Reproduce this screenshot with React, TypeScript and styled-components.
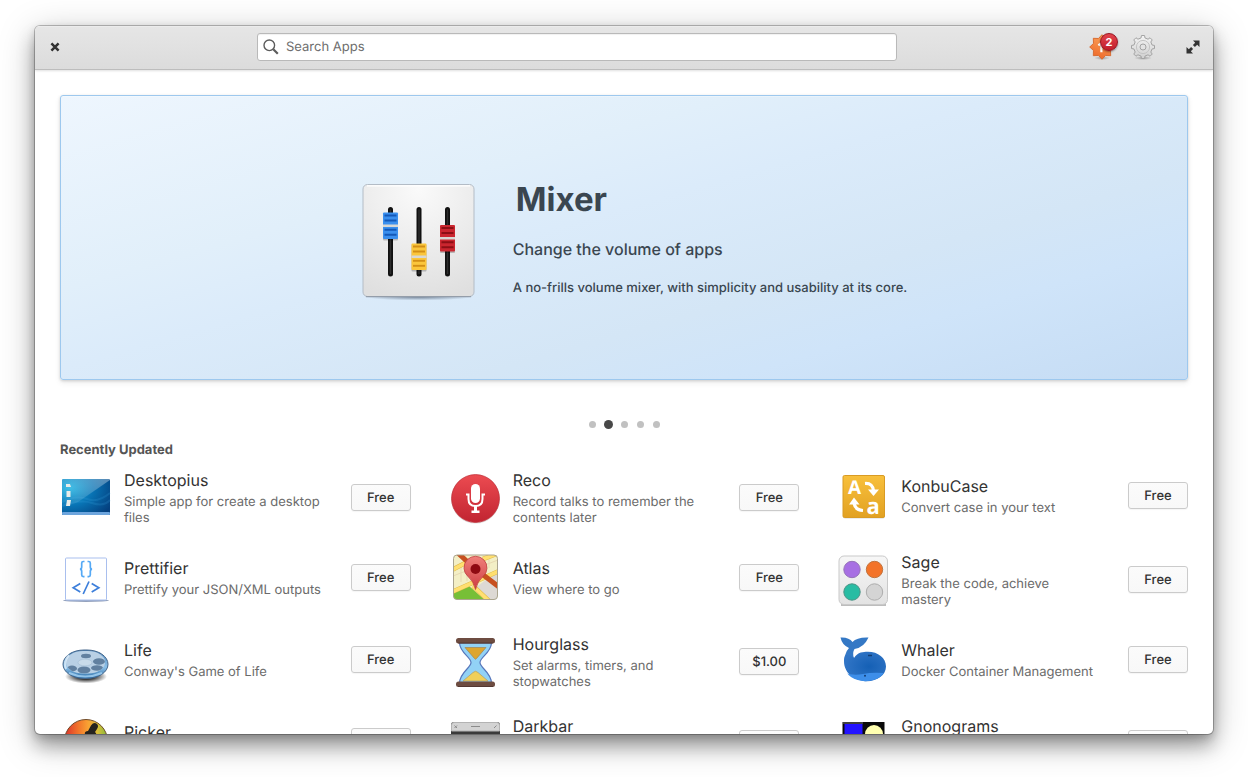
import React from "react";
import styled, { createGlobalStyle } from "styled-components";

const GlobalStyle = createGlobalStyle`
  *, *::before, *::after { box-sizing: border-box; }
  body {
    margin: 0;
    background: #fff;
    color: #333;
    font-family: Inter, "Open Sans", sans-serif;
    font-size: 13px;
    text-rendering: geometricPrecision;
  }
  h1, h2, h3, p { margin: 0; }
  button, input { font: inherit; color: inherit; text-rendering: inherit; }
`;

const Desktop = styled.div`
  display: flex;
  height: 100vh;
  min-height: 400px;
  padding: 26px 35px 43px;
  overflow: hidden;
`;

const Window = styled.div`
  flex: 1;
  min-width: 0;
  display: flex;
  flex-direction: column;
  overflow: hidden;
  border-radius: 5px;
  background: #fff;
  box-shadow:
    0 0 0 1px rgba(0, 0, 0, 0.24),
    0 3px 8px rgba(0, 0, 0, 0.16),
    0 12px 18px rgba(0, 0, 0, 0.28),
    0 8px 36px rgba(0, 0, 0, 0.26);
`;

const HeaderBar = styled.header`
  flex: none;
  display: flex;
  align-items: center;
  height: 44px;
  padding: 0 8px 2px;
  background: linear-gradient(#e6e6e6, #dcdcdc);
  border-bottom: 1px solid #bdbdbd;
  box-shadow: inset 0 1px #ececec, 0 1px 2px rgba(0, 0, 0, 0.12);
`;

const IconButton = styled.button<{ $size: number }>`
  position: relative;
  display: grid;
  place-items: center;
  width: ${(p) => p.$size}px;
  height: ${(p) => p.$size}px;
  padding: 0;
  border: 0;
  background: none;
`;

const SearchField = styled.label`
  display: flex;
  align-items: center;
  gap: 7px;
  flex: 0 1 640px;
  height: 28px;
  margin: 0 auto;
  padding: 0 5px;
  background: #fff;
  border: 1px solid #b9b9b9;
  border-radius: 3px;
  box-shadow: inset 0 1px 1px rgba(0, 0, 0, 0.06);
`;

const SearchInput = styled.input`
  flex: 1;
  min-width: 0;
  padding: 0;
  border: 0;
  outline: 0;
  background: none;
  line-height: 18px;
  &::placeholder { color: #6e6e6e; opacity: 1; }
`;

const HeaderActions = styled.div`
  display: flex;
  align-items: center;
  gap: 8px;
  margin-right: 22px;
`;

const Badge = styled.span`
  position: absolute;
  top: 2px;
  right: 1px;
  width: 18px;
  height: 18px;
  border: 1px solid #99131f;
  border-radius: 50%;
  background: linear-gradient(#e2434d, #c1202c);
  box-shadow: 0 1px 2px rgba(0, 0, 0, 0.4);
  color: #fff;
  font-size: 11px;
  font-weight: 700;
  line-height: 16px;
  text-align: center;
`;

const Content = styled.main`
  flex: 1;
  min-height: 0;
  overflow: hidden;
  padding: 25px 25px 0;
`;

const Hero = styled.section`
  display: flex;
  align-items: center;
  justify-content: center;
  gap: 36px;
  height: 285px;
  padding: 0 0 1px 8px;
  border: 1px solid #9dc8ee;
  border-radius: 3px;
  background: linear-gradient(164deg, #eef6fe 0%, #e1effa 32%, #dbebfa 45%, #d4e6f6 66%, #cfe4f9 78%, #c5dcf4 100%);
  box-shadow: inset 0 1px rgba(255, 255, 255, 0.3), 0 1px 3px rgba(0, 0, 0, 0.16), 0 3px 6px rgba(0, 0, 0, 0.07);
  color: #3a4650;
`;

const HeroTitle = styled.h1`
  padding-left: 3px;
  font-size: 33px;
  font-weight: 700;
  line-height: 42px;
`;

const HeroSummary = styled.p`
  margin-top: 17px;
  font-size: 16px;
  font-weight: 500;
  line-height: 24px;
`;

const HeroDetail = styled.p`
  margin-top: 18px;
  font-weight: 500;
  line-height: 18px;
`;

const Pager = styled.nav`
  display: flex;
  justify-content: center;
  margin-top: 36px;
`;

const PagerDot = styled.button<{ $active?: boolean }>`
  display: grid;
  place-items: center;
  width: 16px;
  height: 16px;
  padding: 0;
  border: 0;
  background: none;
  &::before {
    content: "";
    width: ${(p) => (p.$active ? 9 : 7)}px;
    height: ${(p) => (p.$active ? 9 : 7)}px;
    border-radius: 50%;
    background: ${(p) => (p.$active ? "#484848" : "#c1c1c1")};
  }
`;

const SectionTitle = styled.h2`
  margin: 9px 0 10px;
  color: #555;
  font-size: 13px;
  font-weight: 700;
  line-height: 18px;
`;

const AppGrid = styled.div`
  display: grid;
  grid-template-columns: repeat(3, minmax(0, 1fr));
  grid-auto-rows: minmax(57px, auto);
  gap: 25px 38px;
  align-items: start;
`;

const AppItem = styled.article`
  display: flex;
  align-items: center;
  gap: 12px;
`;

const AppText = styled.div`
  flex: 1;
  min-width: 0;
  padding-right: 16px;
`;

const AppName = styled.h3`
  margin-bottom: 3px;
  font-size: 16px;
  font-weight: 400;
  line-height: 22px;
`;

const AppSummary = styled.p`
  color: #6b6b6b;
  line-height: 16px;
`;

const PriceButton = styled.button`
  flex: none;
  width: 60px;
  height: 27px;
  padding: 1px 0 0;
  border: 1px solid #cbcbcb;
  border-radius: 3px;
  background: linear-gradient(#fbfbfb, #f8f8f8);
  box-shadow: 0 1px 1px rgba(0, 0, 0, 0.04);
  font-weight: 500;
  line-height: 18px;
`;

const GlyphText = styled.text`
  font-family: "Open Sans", sans-serif;
  font-weight: 700;
`;

const Icon = ({ children }: { children: React.ReactNode }) => (
  <svg width="52" height="52" viewBox="0 0 52 52" aria-hidden="true">
    {children}
  </svg>
);

const starPath = (cx: number, cy: number, outer: number, inner: number, points: number) =>
  Array.from({ length: points * 2 }, (_, i) => {
    const r = i % 2 ? inner : outer;
    const a = (Math.PI * (i + 1)) / points;
    return `${i ? "L" : "M"}${(cx + r * Math.sin(a)).toFixed(2)} ${(cy - r * Math.cos(a)).toFixed(2)}`;
  }).join("") + "Z";

const gearPath = (cx: number, cy: number, outer: number, inner: number, teeth: number) => {
  const step = (Math.PI * 2) / teeth;
  const pt = (r: number, a: number) => `${(cx + r * Math.sin(a)).toFixed(2)} ${(cy - r * Math.cos(a)).toFixed(2)}`;
  return Array.from({ length: teeth }, (_, i) => {
    const a = i * step;
    return `${i ? "L" : "M"}${pt(inner, a - step * 0.27)}L${pt(outer, a - step * 0.17)}L${pt(outer, a + step * 0.17)}L${pt(inner, a + step * 0.27)}`;
  }).join("") + "Z";
};

const SearchIcon = () => (
  <svg width="16" height="16" viewBox="0 0 16 16" fill="none" stroke="#5c5c5c" aria-hidden="true">
    <circle cx="6.3" cy="6.3" r="5.3" strokeWidth="1.4" />
    <path d="M10.3 10.3 14.8 14.8" strokeWidth="2.2" />
  </svg>
);

const CloseIcon = () => (
  <svg width="10" height="10" viewBox="0 0 10 10" aria-hidden="true">
    <path d="M1.4 1.4 8.6 8.6M8.6 1.4 1.4 8.6" stroke="#333" strokeWidth="2.5" />
  </svg>
);

const UpdatesIcon = () => (
  <svg width="32" height="32" viewBox="0 0 32 32" aria-hidden="true">
    <defs>
      <linearGradient id="burst" x2="0" y2="1"><stop stopColor="#fba25a" /><stop offset="1" stopColor="#ee6c2c" /></linearGradient>
      <radialGradient id="iconShade"><stop stopOpacity=".3" /><stop offset="1" stopOpacity="0" /></radialGradient>
    </defs>
    <ellipse cx="15" cy="27" rx="8" ry="2" fill="url(#iconShade)" />
    <path d={starPath(15, 16, 12.3, 9.2, 8)} transform="rotate(22.5 15 16)" fill="url(#burst)" stroke="#d5652b" strokeWidth=".8" strokeLinejoin="round" />
    <path d="M14.4 11.5v9.8M14.6 11.8l-3.2 2.6" stroke="#fff" strokeWidth="2.2" fill="none" />
  </svg>
);

const GearIcon = () => (
  <svg width="32" height="32" viewBox="0 0 32 32" aria-hidden="true">
    <defs>
      <linearGradient id="gear" x2="0" y2="1"><stop stopColor="#f4f4f4" /><stop offset="1" stopColor="#cfcfcf" /></linearGradient>
    </defs>
    <ellipse cx="16" cy="27" rx="9" ry="2" fill="url(#iconShade)" />
    <path d={gearPath(16, 16, 11.6, 9.3, 8)} fill="url(#gear)" stroke="#a3a3a3" strokeWidth="1" strokeLinejoin="round" />
    <circle cx="16" cy="16" r="6.6" fill="none" stroke="#c4c4c4" />
    <circle cx="16" cy="16" r="3" fill="#e3e3e3" stroke="#a3a3a3" />
  </svg>
);

const ExpandIcon = () => (
  <svg width="14" height="14" viewBox="0 0 14 14" aria-hidden="true">
    <path d="M7 .5H13.5V7L11.2 4.8 8.9 7.1 6.9 5.1 9.2 2.8ZM7 13.5H.5V7L2.8 9.2 5.1 6.9 7.1 8.9 4.8 11.2Z" fill="#333" />
  </svg>
);

const Fader = ({ x, y, body, line }: { x: number; y: number; body: string; line: string }) => (
  <g>
    <path d={`M${x} 36.5V101`} stroke="#111" strokeWidth="5" strokeLinecap="round" />
    <path d={`M${x} 36.5V101`} stroke="#2d2d2d" strokeWidth="1.5" />
    <rect x={x - 7.5} y={y + 1} width="15" height="27" rx="1" fill="#000" opacity=".22" />
    <rect x={x - 7.5} y={y} width="15" height="26.5" rx="1" fill={body} />
    <rect x={x - 7.5} y={y + 12} width="15" height="2.5" fill="#d8d8d4" />
    {[3, 8, 17.3, 22.3].map((d) => (
      <path key={d} d={`M${x - 6} ${y + d}h12`} stroke={line} strokeWidth="1.9" />
    ))}
  </g>
);

const MixerIcon = () => (
  <svg width="128" height="128" viewBox="0 0 128 128" aria-hidden="true">
    <defs>
      <radialGradient id="plate" cx=".5" cy=".05" r="1"><stop stopColor="#fafafa" /><stop offset="1" stopColor="#dfdfdf" /></radialGradient>
      <radialGradient id="plateShade"><stop stopColor="#1c2c44" stopOpacity=".5" /><stop offset="1" stopColor="#1c2c44" stopOpacity="0" /></radialGradient>
    </defs>
    <ellipse cx="69.5" cy="124" rx="54" ry="3.5" fill="url(#plateShade)" />
    <rect x="14" y="11.5" width="111" height="112" rx="4.5" fill="url(#plate)" stroke="#b3bcc6" />
    <path d="M18 12.8H121" stroke="#fff" strokeWidth="1.2" />
    <path d="M17 123.7H122" stroke="#8d97a3" strokeWidth="1" />
    <Fader x={41.5} y={39.5} body="#3a8fee" line="#1358b8" />
    <Fader x={70} y={70.5} body="#fbc63c" line="#d38f16" />
    <Fader x={98.5} y={52} body="#ca262f" line="#8c0f15" />
  </svg>
);

const DesktopiusIcon = () => (
  <Icon>
    <defs>
      <radialGradient id="sea" cx=".15" cy=".25" r="1"><stop stopColor="#1fb3e2" /><stop offset=".5" stopColor="#0873b4" /><stop offset="1" stopColor="#04407f" /></radialGradient>
      <linearGradient id="glare" x1="0" y1="1" x2="1" y2="0"><stop stopColor="#fff" stopOpacity="0" /><stop offset="1" stopColor="#fff" stopOpacity=".35" /></linearGradient>
    </defs>
    <rect x="2" y="7" width="48" height="36" rx="1" fill="url(#sea)" />
    <path d="M2 30Q16 23 27 27T50 21M2 34Q20 27 32 31T50 28" stroke="#3da4df" strokeOpacity=".2" strokeWidth="2" fill="none" />
    <path d="M18 30 50 8V7H2V36Z" fill="url(#glare)" />
    <rect x="2" y="40" width="48" height="3" rx="1" fill="#6da5dd" />
    <g fill="#e9ece9"><path d="M6 12h4l1 3H6z" /><rect x="6.5" y="19" width="4" height="6" /><path d="M7 28h4l-1 6H6z" /></g>
  </Icon>
);

const PrettifierIcon = () => (
  <Icon>
    <ellipse cx="26" cy="49.5" rx="23" ry="1.5" fill="#29457c" opacity=".5" />
    <rect x="5.5" y="7" width="41" height="42" rx="1" fill="#fff" stroke="#a9bfee" />
    <g fill="none" strokeWidth="1.7">
      <path d="M24.5 10.5h-1.2q-1.6 0-1.6 1.6v3.6q0 2.4-1.8 2.4 1.8 0 1.8 2.4v3.6q0 1.6 1.6 1.6h1.2M27.5 10.5h1.2q1.6 0 1.6 1.6v3.6q0 2.4 1.8 2.4-1.8 0-1.8 2.4v3.6q0 1.6-1.6 1.6h-1.2" stroke="#55a9f5" />
      <path d="M20.3 32.5 13.2 36.8 20.3 41M31.7 32.5 38.8 36.8 31.7 41M29 30.5 23.2 43" stroke="#3d7fdb" />
    </g>
  </Icon>
);

const LifeIcon = () => (
  <Icon>
    <defs>
      <linearGradient id="dish" x2="0" y2="1"><stop stopColor="#4e86b9" /><stop offset=".6" stopColor="#8cc0e8" /><stop offset="1" stopColor="#2a6ca6" /></linearGradient>
      <radialGradient id="dishShade"><stop offset=".4" stopOpacity=".8" /><stop offset="1" stopOpacity="0" /></radialGradient>
      <clipPath id="dishTop"><rect x="6" y="18" width="39" height="22.5" rx="17" ry="11" /></clipPath>
    </defs>
    <ellipse cx="26" cy="43.5" rx="21" ry="7" fill="url(#dishShade)" />
    <rect x="3" y="17" width="45" height="28.5" rx="21" ry="14.2" fill="url(#dish)" stroke="#44658a" />
    <path d="M9 40Q25 47 42 40" stroke="#a8d4f5" strokeWidth="2" fill="none" opacity=".8" />
    <g clipPath="url(#dishTop)">
      <rect x="6" y="18" width="39" height="23" fill="#b9d0e5" />
      <g fill="#6180a0">
        <ellipse cx="26" cy="23" rx="5" ry="2.2" /><ellipse cx="39" cy="28.5" rx="6" ry="3.3" />
        <ellipse cx="12" cy="35.5" rx="5" ry="3" /><ellipse cx="24" cy="37" rx="6.5" ry="3.5" /><ellipse cx="37" cy="35" rx="6" ry="2.8" />
      </g>
      <ellipse cx="25" cy="29.5" rx="7" ry="3.4" fill="#c9dbea" stroke="#a3bdd5" strokeWidth=".6" />
    </g>
    <path d="M6 36Q3 29 9 22" stroke="#e6f3fc" strokeWidth="2" fill="none" opacity=".75" />
  </Icon>
);

const PickerIcon = () => (
  <Icon>
    <defs>
      <linearGradient id="hue"><stop stopColor="#d9302c" /><stop offset=".3" stopColor="#f0702a" /><stop offset=".55" stopColor="#f9a233" /><stop offset=".78" stopColor="#d6bf3a" /><stop offset="1" stopColor="#7fb93a" /></linearGradient>
    </defs>
    <circle cx="26" cy="26" r="21.5" fill="url(#hue)" stroke="#6f4a28" />
    <path d="M31 10.500q3-4 6-1.500 2 2 0 5l-2 3q2 2 1 4l-11-1.500q-1-3 3-3.500z" fill="#26231f" />
  </Icon>
);

const RecoIcon = () => (
  <Icon>
    <defs><linearGradient id="rec" x2="0" y2="1"><stop stopColor="#ec4b51" /><stop offset="1" stopColor="#c12431" /></linearGradient></defs>
    <circle cx="26.5" cy="27.3" r="24.3" fill="#000" opacity=".12" />
    <circle cx="26.5" cy="26.5" r="23.9" fill="url(#rec)" stroke="#c13039" strokeWidth=".8" />
    <rect x="22" y="12" width="9" height="19" rx="4.5" fill="#fff" />
    <path d="M17 22.5H19.5V27Q19.5 34 26.5 34T33.5 27V22.5H36" stroke="#fff" strokeWidth="2" fill="none" />
    <path d="M25 34H28V38.5H30.5V41H22.5V38.5H25Z" fill="#fff" />
  </Icon>
);

const AtlasIcon = () => (
  <Icon>
    <defs>
      <clipPath id="map"><rect x="4.5" y="4" width="44" height="44.5" rx="3.5" /></clipPath>
      <linearGradient id="pin" x2="0" y2="1"><stop stopColor="#f0817b" /><stop offset="1" stopColor="#cd3c42" /></linearGradient>
    </defs>
    <g clipPath="url(#map)">
      <rect x="4" y="4" width="45" height="45" fill="#f3efc6" />
      <path d="M26 37 49 20V49H35Z" fill="#ddd9d4" />
      <path d="M4 41 20 35 36 49H4Z" fill="#77bf37" />
      <path d="M12 14V31M18 9V30M4 25 22 18M40 8V17M36 14 49 9" stroke="#e7d9b2" strokeWidth="1" />
      <path d="M3 19 22 9M34 8 50 2M3 41 50 20M24 35 40 50" stroke="#e0bb48" strokeWidth="4.6" fill="none" />
      <path d="M3 19 22 9M34 8 50 2M3 41 50 20M24 35 40 50" stroke="#ffdf70" strokeWidth="3.6" fill="none" />
      <path d="M9 2 24 16M33 23 50 36" stroke="#c7501f" strokeWidth="5" />
    </g>
    <rect x="4.5" y="4" width="44" height="44.5" rx="3.5" fill="none" stroke="#aba58f" />
    <path d="M26.5 38.5Q24.5 30 19 25.5A11.5 11.5 0 1 1 34 25.5Q28.5 30 26.5 38.5Z" fill="url(#pin)" stroke="#b73a3c" strokeWidth=".7" />
    <circle cx="26.5" cy="18" r="5" fill="#8e0a12" />
  </Icon>
);

const HourglassIcon = () => (
  <Icon>
    <path d="M10.5 7H42.5C42 17 31 21 31 26.5S42 36 42.5 47H10.5C11 36 22 32 22 26.5S11 17 10.5 7Z" fill="#92d2f6" stroke="#5676bb" strokeWidth="1.2" />
    <path d="M16 11.5H37L27.5 22.5Q26.5 24 25.5 22.5Z" fill="#dda52f" stroke="#a58a58" strokeWidth=".8" />
    <path d="M14 45Q21 39 24 36.5 26.5 34 29 36.5 32 39 39 45Z" fill="#f0cf59" stroke="#b4a36b" strokeWidth=".8" />
    <rect x="7" y="2" width="39" height="5.5" rx="2.5" fill="#6d4c41" />
    <rect x="7" y="45.5" width="39" height="5.5" rx="2.5" fill="#6d4c41" />
    <path d="M9 7H44M9 50.5H44" stroke="#4e342e" strokeWidth=".8" />
  </Icon>
);

const DarkbarIcon = () => (
  <Icon>
    <rect x="2" y="4" width="49" height="43" rx="3" fill="#3a3a3a" />
    <path d="M2.5 13V7Q2.5 4.500 5 4.500H48Q50.500 4.500 50.500 7V13Z" fill="#d3d3d3" stroke="#b3b3b3" />
    <path d="M5.500 7.500l2.500 2.500m0-2.500-2.500 2.500M22 8.500h9M45 10l2.500-2.500" stroke="#8b8b8b" />
  </Icon>
);

const KonbuIcon = () => (
  <Icon>
    <defs><linearGradient id="amber" x2="0" y2="1"><stop stopColor="#f8c03c" /><stop offset="1" stopColor="#e2a122" /></linearGradient></defs>
    <rect x="6" y="7" width="42" height="42.5" rx="2" fill="#000" opacity=".15" />
    <rect x="6" y="6.5" width="41.5" height="42" rx="1.5" fill="url(#amber)" stroke="#d99b24" />
    <g fill="#fff">
      <GlyphText x="11" y="25" fontSize="19">A</GlyphText>
      <GlyphText x="29.5" y="45" fontSize="22">a</GlyphText>
    </g>
    <path d="M28 14.5Q36 14 36.5 22" stroke="#fff" strokeWidth="3.2" fill="none" />
    <path d="M31 20.5H42L36.5 27Z" fill="#fff" />
    <path d="M26 41.5Q18 41 17 34" stroke="#fff" strokeWidth="3.2" fill="none" />
    <path d="M12 35.5H22.5L17 28.5Z" fill="#fff" />
  </Icon>
);

const SageIcon = () => (
  <Icon>
    <defs><linearGradient id="sage" x2="0" y2="1"><stop stopColor="#f7f7f7" /><stop offset="1" stopColor="#e3e3e3" /></linearGradient></defs>
    <path d="M4 51H49" stroke="#000" strokeOpacity=".35" strokeWidth="1.5" />
    <rect x="2" y="2" width="48.5" height="48.5" rx="5" fill="url(#sage)" stroke="#c9c9c9" />
    <g strokeWidth="1">
      <circle cx="15" cy="15.5" r="8.2" fill="#a76fe3" stroke="#9472b8" />
      <circle cx="37.5" cy="15.5" r="8.2" fill="#f37329" stroke="#c1743f" />
      <circle cx="15" cy="38" r="8.2" fill="#28bca3" stroke="#4c9386" />
      <circle cx="37.5" cy="38" r="8.2" fill="#d4d4d4" stroke="#adadad" />
    </g>
  </Icon>
);

const WhalerIcon = () => (
  <Icon>
    <defs>
      <radialGradient id="whale" cx=".6" cy=".5" r=".6"><stop stopColor="#1560b5" /><stop offset="1" stopColor="#3175c6" /></radialGradient>
      <clipPath id="whaleBody"><ellipse cx="28.5" cy="33.5" rx="20.5" ry="14.7" /></clipPath>
    </defs>
    <path d="M3.5 4.5Q12 4 15.5 9 20 4 31.5 4.5 27 14.5 17.5 16 15 20 17 25L8 33Q6 21 12 15 5 12 3.5 4.5Z" fill="#3478c5" />
    <path d="M7 28C7 18 14 23 17 25 21 18.5 28 18.8 31 18.8 41 18.8 49 25 49 33.5S40 48.2 30 48.2 7 42 7 28Z" fill="url(#whale)" />
    <path clipPath="url(#whaleBody)" d="M8 40Q17 43 26 41T47 40L40 49H16Z" fill="#3d8ee9" />
    <path d="M31 22.5h4" stroke="#123c70" strokeWidth="1.5" />
    <circle cx="28" cy="42.8" r="1" fill="#143f77" />
  </Icon>
);

const GnonogramsIcon = () => (
  <Icon>
    <rect x="5.5" y="4" width="42" height="42" fill="#0a0a0a" />
    <rect x="7.5" y="6" width="18" height="18" fill="#2313ff" />
    <path d="M6 5H26" stroke="#777" />
    <circle cx="37" cy="16" r="9" fill="#ffffb0" />
    <rect x="28" y="27" width="18" height="18" fill="#2313ff" />
  </Icon>
);

type AppEntry = { name: string; summary: string; price: string; icon: React.FC };

const apps: AppEntry[] = [
  { name: "Desktopius", summary: "Simple app for create a desktop files", price: "Free", icon: DesktopiusIcon },
  { name: "Reco", summary: "Record talks to remember the contents later", price: "Free", icon: RecoIcon },
  { name: "KonbuCase", summary: "Convert case in your text", price: "Free", icon: KonbuIcon },
  { name: "Prettifier", summary: "Prettify your JSON/XML outputs", price: "Free", icon: PrettifierIcon },
  { name: "Atlas", summary: "View where to go", price: "Free", icon: AtlasIcon },
  { name: "Sage", summary: "Break the code, achieve mastery", price: "Free", icon: SageIcon },
  { name: "Life", summary: "Conway's Game of Life", price: "Free", icon: LifeIcon },
  { name: "Hourglass", summary: "Set alarms, timers, and stopwatches", price: "$1.00", icon: HourglassIcon },
  { name: "Whaler", summary: "Docker Container Management", price: "Free", icon: WhalerIcon },
  { name: "Picker", summary: "Pick colors from the screen", price: "Free", icon: PickerIcon },
  { name: "Darkbar", summary: "Choose light or dark title bars per window", price: "Free", icon: DarkbarIcon },
  { name: "Gnonograms", summary: "Design and solve nonogram picture puzzles", price: "Free", icon: GnonogramsIcon },
];

const pages = ["First", "Second", "Third", "Fourth", "Fifth"];

export default function App() {
  return (
    <>
      <GlobalStyle />
      <Desktop>
        <Window>
          <HeaderBar>
            <IconButton $size={24} aria-label="Close"><CloseIcon /></IconButton>
            <SearchField>
              <SearchIcon />
              <SearchInput type="text" placeholder="Search Apps" aria-label="Search Apps" />
            </SearchField>
            <HeaderActions>
              <IconButton $size={32} aria-label="Updates">
                <UpdatesIcon />
                <Badge>2</Badge>
              </IconButton>
              <IconButton $size={32} aria-label="Settings"><GearIcon /></IconButton>
            </HeaderActions>
            <IconButton $size={24} aria-label="Maximize"><ExpandIcon /></IconButton>
          </HeaderBar>
          <Content>
            <Hero>
              <MixerIcon />
              <div>
                <HeroTitle>Mixer</HeroTitle>
                <HeroSummary>Change the volume of apps</HeroSummary>
                <HeroDetail>A no-frills volume mixer, with simplicity and usability at its core.</HeroDetail>
              </div>
            </Hero>
            <Pager aria-label="Featured apps">
              {pages.map((page, i) => (
                <PagerDot key={page} $active={i === 1} aria-label={page} />
              ))}
            </Pager>
            <SectionTitle>Recently Updated</SectionTitle>
            <AppGrid>
              {apps.map(({ name, summary, price, icon: AppIcon }) => (
                <AppItem key={name}>
                  <AppIcon />
                  <AppText>
                    <AppName>{name}</AppName>
                    <AppSummary>{summary}</AppSummary>
                  </AppText>
                  <PriceButton>{price}</PriceButton>
                </AppItem>
              ))}
            </AppGrid>
          </Content>
        </Window>
      </Desktop>
    </>
  );
}
